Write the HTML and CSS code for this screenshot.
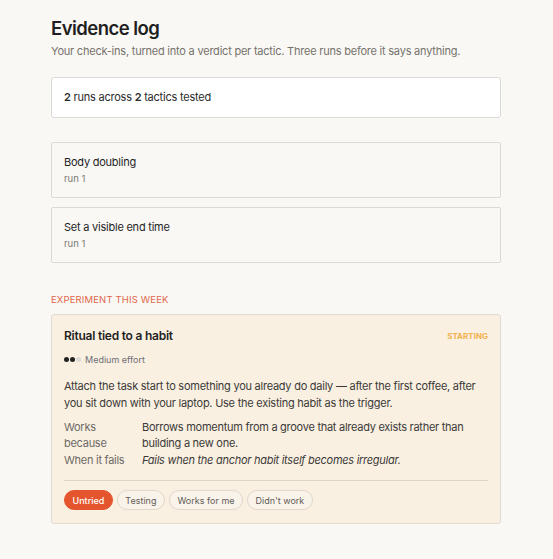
FILE: index.html
```html
<!DOCTYPE html>
<html lang="en">
<head>
    <meta charset="UTF-8">
    <meta name="viewport" content="width=device-width, initial-scale=1.0">
    <title>Evidence log</title>
    <link rel="stylesheet" href="styles.css">
</head>
<body>
    <div class="page">
        <h1 class="title">Evidence log</h1>
        <p class="subtitle">Your check-ins, turned into a verdict per tactic. Three runs before it says anything.</p>

        <div class="summary"><b>2</b> runs across <b>2</b> tactics tested</div>

        <div class="tactics">
            <div class="tactic">
                <div class="tactic-name">Body doubling</div>
                <div class="tactic-runs">run 1</div>
            </div>
            <div class="tactic">
                <div class="tactic-name">Set a visible end time</div>
                <div class="tactic-runs">run 1</div>
            </div>
        </div>

        <div class="section-label">Experiment this week</div>
        <div class="experiment">
            <div class="exp-head">
                <div class="exp-title">Ritual tied to a habit</div>
                <div class="exp-status">Starting</div>
            </div>
            <div class="effort">
                <span class="dot on"></span><span class="dot on"></span><span class="dot"></span>
                <span class="effort-text">Medium effort</span>
            </div>
            <p class="exp-desc">Attach the task start to something you already do daily — after the first coffee, after you sit down with your laptop. Use the existing habit as the trigger.</p>
            <div class="facts">
                <div class="fact-key">Works because</div>
                <div class="fact-val">Borrows momentum from a groove that already exists rather than building a new one.</div>
                <div class="fact-key">When it fails</div>
                <div class="fact-val fails">Fails when the anchor habit itself becomes irregular.</div>
            </div>
            <div class="pills">
                <button class="pill active">Untried</button>
                <button class="pill">Testing</button>
                <button class="pill">Works for me</button>
                <button class="pill">Didn't work</button>
            </div>
        </div>
    </div>
</body>
</html>
```

FILE: styles.css
```css
body {
    margin: 0;
    padding: 0;
    background: #f9f8f5;
    font-family: Inter, "Noto Sans", sans-serif;
    color: #1f1f1f;
}
.page {
    width: 450px;
    margin-left: 51px;
    padding-top: 16px;
}
.title {
    font-size: 18.5px;
    font-weight: 600;
    margin: 0;
    line-height: 24px;
    letter-spacing: -0.55px;
}
.subtitle {
    margin: 3px 0 0;
    font-size: 11px;
    line-height: 16px;
    letter-spacing: -0.22px;
    color: #76726c;
}
.summary {
    margin-top: 18px;
    background: #fff;
    border: 1px solid #dcdad6;
    border-radius: 3px;
    padding: 11px 12px 12px;
    font-size: 11px;
    line-height: 16px;
    letter-spacing: -0.22px;
    color: #2a2a2a;
}
.summary b {
    font-weight: 600;
}
.tactics {
    margin-top: 24px;
    display: flex;
    flex-direction: column;
    gap: 9px;
}
.tactic {
    border: 1px solid #dcdad6;
    border-radius: 2px;
    height: 56px;
    box-sizing: border-box;
    padding: 11px 12px 0;
}
.tactic-name {
    font-size: 11px;
    line-height: 16px;
    letter-spacing: -0.23px;
}
.tactic-runs {
    font-size: 9.5px;
    line-height: 13px;
    margin-top: 2px;
    color: #7b7872;
}
.section-label {
    margin-top: 31px;
    font-size: 9.5px;
    letter-spacing: 0.15px;
    text-transform: uppercase;
    color: #e2664a;
    line-height: 12px;
}
.experiment {
    margin-top: 8px;
    background: #faf0e2;
    border: 1px solid #e1dad0;
    border-radius: 3px;
    padding: 13px 12px 13px;
}
.exp-head {
    display: flex;
    justify-content: space-between;
    align-items: center;
}
.exp-title {
    font-size: 12px;
    font-weight: 600;
    line-height: 16px;
    letter-spacing: -0.24px;
}
.exp-status {
    font-size: 8px;
    font-weight: 700;
    text-transform: uppercase;
    color: #f2b24e;
}
.effort {
    margin-top: 8px;
    display: flex;
    align-items: center;
    height: 14px;
}
.dot {
    width: 5px;
    height: 5px;
    border-radius: 50%;
    background: #dedad4;
    margin-right: 1px;
}
.dot.on {
    background: #222;
}
.effort-text {
    margin-left: 3px;
    font-size: 9px;
    color: #6f6e74;
}
.exp-desc {
    margin: 12px 0 0;
    font-size: 11px;
    line-height: 17px;
    letter-spacing: -0.25px;
    color: #3b3a38;
}
.facts {
    margin-top: 7px;
    display: grid;
    grid-template-columns: 70px 1fr;
    column-gap: 8px;
    row-gap: 1px;
    font-size: 11px;
    line-height: 16px;
    letter-spacing: -0.27px;
    color: #3b3a38;
}
.fact-key {
    color: #6d6a66;
}
.fails {
    font-style: italic;
}
.pills {
    margin-top: 12px;
    padding-top: 9px;
    border-top: 1px solid #ddd4c8;
    display: flex;
    gap: 4px;
}
.pill {
    font-family: inherit;
    font-size: 9px;
    height: 20px;
    padding: 0 7.5px;
    border-radius: 10px;
    border: 1px solid #e0d6cb;
    background: #faf3ea;
    color: #5f5c58;
}
.pill.active {
    background: #e4552d;
    border-color: #e4552d;
    color: #fff;
    font-weight: 500;
}
```
